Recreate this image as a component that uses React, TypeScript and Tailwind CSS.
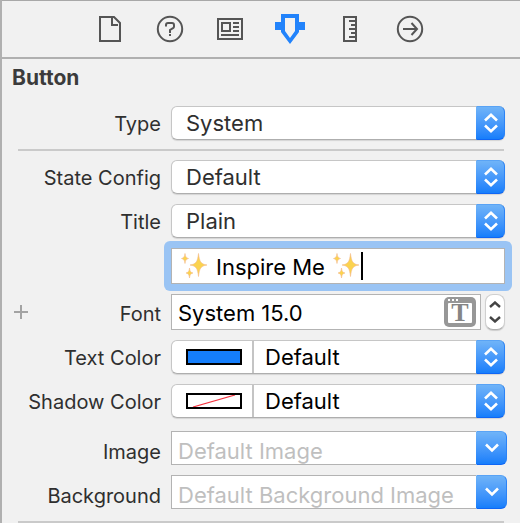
import { useState, type ReactNode } from "react";

function Chevrons() {
  return (
    <svg width="14" height="20" viewBox="0 0 14 20" fill="none" stroke="currentColor" strokeWidth="2.6">
      <path d="M1 7.5 7 1.8l6 5.700" />
      <path d="m1 12.500 6 5.700 6-5.700" />
    </svg>
  );
}

function Sparkles() {
  return (
    <svg className="shrink-0" width="27" height="26" viewBox="0 0 27 26" role="img" aria-label="sparkles">
      <g fill="#fbd34f" stroke="#f3b98a" strokeWidth="0.6">
        <path d="M17.500 0.500c1 8 2 10.500 8.500 11.500-6.500 1-7.500 3.500-8.500 11.500-1-8-2-10.500-8.500-11.500 6.500-1 7.500-3.500 8.500-11.500z" />
        <path d="M4 .5c.5 3.500 1 4.200 3.500 5C5 6.300 4.500 7 4 10.500 3.500 7 3 6.300.5 5.500 3 4.700 3.500 4 4 .5z" />
        <path d="M8.500 15c.5 3.500 1 4.200 3.500 5-2.500.8-3 1.500-3.500 5-.5-3.500-1-4.200-3.500-5 2.500-.8 3-1.500 3.500-5z" />
      </g>
    </svg>
  );
}

const tabs: { name: string; active?: boolean; art: ReactNode }[] = [
  { name: "File", art: <path d="M5 3h14l6 6v18H5zM17 4v7h6" /> },
  {
    name: "Help",
    art: (
      <>
        <circle cx="15" cy="15" r="12.200" />
        <path d="M11 12.500V11q0-2 2-2h4q2 0 2 2v1.500q0 1-1 1.700L15 16v3M15 20v2" />
      </>
    ),
  },
  { name: "Identity", art: <path d="M3 5h24v20H3zM7 9h8v8H7zM18 9h6M18 13h6M18 17h6M6 21h18" /> },
  {
    name: "Attributes",
    active: true,
    art: (
      <path
        d="M6 0h18v8h6v8h-6v2l-9 12-9-12v-2H0V8h6zM10 4v13l5 7 5-7V4z"
        fill="currentColor"
        fillRule="evenodd"
        stroke="none"
      />
    ),
  },
  { name: "Size", art: <path d="M9 3h12v24H9zM14 7h6M16 11h4M14 15h6M16 19h4M14 23h6" /> },
  {
    name: "Connections",
    art: (
      <>
        <circle cx="15" cy="15" r="12.200" />
        <path d="M8 15h14M16.500 9l5.500 6-5.500 6" />
      </>
    ),
  },
];

function Row({ label, id, low, children }: { label: string; id: string; low?: boolean; children: ReactNode }) {
  return (
    <div className={`flex items-center gap-2.5 ${low ? "pr-[13px]" : "pr-[15px]"}`}>
      <label htmlFor={id} className={`w-[159px] shrink-0 text-right text-[20px] leading-6 ${low ? "pt-2" : "pt-0.5"}`}>
        {label}
      </label>
      {children}
    </div>
  );
}

const cap =
  "flex shrink-0 items-center justify-center rounded-r-[6px] border border-t-[#59a3f5] border-r-[#2b83f7] border-b-[#0f66f5] border-l-transparent bg-linear-to-b from-[#6fb3f8] to-[#157efb] text-white";

function PopUp({ id, options, well }: { id: string; options: string[]; well?: ReactNode }) {
  return (
    <div className="relative flex h-[34px] min-w-0 flex-1 rounded-[6px] border border-[#c6c6c6] border-b-[#aeaeae] bg-white shadow-[0_1px_1px_rgba(0,0,0,0.12)]">
      {well}
      <select
        id={id}
        className={`min-w-0 flex-1 appearance-none bg-transparent text-[22px] leading-7 outline-none ${well ? "pl-[11px] text-black" : "pl-3.5"}`}
      >
        {options.map((o) => (
          <option key={o}>{o}</option>
        ))}
      </select>
      <span className={`${cap} pointer-events-none absolute -top-px -right-px -bottom-px w-[29px]`}>
        <Chevrons />
      </span>
    </div>
  );
}

function Well({ label, empty }: { label: string; empty?: boolean }) {
  return (
    <button type="button" aria-label={label} className="flex w-[82px] shrink-0 items-center border-r-2 border-[#c4c4c4] pl-3.5">
      <span className={`block h-4 w-14 border-2 border-black ${empty ? "bg-white" : "bg-[#157efb]"}`}>
        {empty && (
          <svg width="52" height="12" viewBox="0 0 52 12" stroke="#f5333f" strokeWidth="1.200">
            <path d="M5 12 47 0" />
          </svg>
        )}
      </span>
    </button>
  );
}

function Combo({ id, placeholder }: { id: string; placeholder: string }) {
  return (
    <div className="flex h-[34px] min-w-0 flex-1">
      <input
        id={id}
        placeholder={placeholder}
        className="min-w-0 flex-1 border border-r-0 border-[#b3b3b3] bg-white pt-1.5 pl-1.5 text-[22px] leading-6 outline-none placeholder:text-[#bfbfbf]"
      />
      <button type="button" aria-label={`Choose ${id}`} className={`${cap} w-[31px]`}>
        <svg width="14" height="10" viewBox="0 0 14 10" fill="none" stroke="currentColor" strokeWidth="2.600">
          <path d="m1 1.500 6 6 6-6" />
        </svg>
      </button>
    </div>
  );
}

export default function App() {
  const [title, setTitle] = useState("Inspire Me");
  return (
    <main className="border-l-2 border-[#b0b0b0] bg-[#f1f1f1] font-['Inter',sans-serif] text-[#2f2f2f]">
      <nav className="flex h-[59px] items-center justify-center border-t border-b-2 border-t-[#a8a8a8] border-b-[#b0b0b0] pr-0.5">
        {tabs.map((t) => (
          <button
            key={t.name}
            type="button"
            aria-label={t.name}
            className={`flex w-[60px] justify-center ${t.active ? "text-[#2283fb]" : "text-[#555]"}`}
          >
            <svg width="30" height="30" viewBox="0 0 30 30" fill="none" stroke="currentColor" strokeWidth="2">
              {t.art}
            </svg>
          </button>
        ))}
      </nav>

      <h2 className="pt-[7px] pb-4 pl-2.5 text-[21px] leading-6 font-bold text-[#3b3b3b]">Button</h2>
      <Row label="Type" id="type">
        <PopUp id="type" options={["System", "Custom"]} />
      </Row>
      <hr className="my-[9px] mr-4 ml-4 border-t-2 border-[#cacaca]" />

      <div className="flex flex-col gap-2.5">
        <Row label="State Config" id="state">
          <PopUp id="state" options={["Default", "Highlighted"]} />
        </Row>
        <Row label="Title" id="title">
          <PopUp id="title" options={["Plain", "Attributed"]} />
        </Row>
        <Row label="" id="title-text">
          <div className="-m-[7px] min-w-0 flex-1 rounded-[6px] bg-[#9ac4f4] p-[7px]">
            <div className="flex h-9 items-center border border-[#b3b3b3] bg-white pl-[9px] text-[22px] text-black">
              <Sparkles />
              <input
                id="title-text"
                aria-label="Title text"
                value={title}
                onChange={(e) => setTitle(e.target.value)}
                className="mx-2 field-sizing-content pt-0.5 leading-7 outline-none"
              />
              <Sparkles />
              <span className="ml-px h-7 w-0.5 bg-black" />
            </div>
          </div>
        </Row>
        <div className="flex items-center gap-2.5 pr-[15px]">
          <div className="flex w-[159px] shrink-0 items-center justify-between pl-3">
            <button type="button" aria-label="Add font variation" className="text-[#a3a3a3]">
              <svg width="14" height="14" viewBox="0 0 14 14" stroke="currentColor" strokeWidth="2">
                <path d="M7 0v14M0 7h14" />
              </svg>
            </button>
            <label htmlFor="font" className="pt-1 text-[20px] leading-6">
              Font
            </label>
          </div>
          <div className="flex min-w-0 flex-1 gap-1">
            <div className="flex h-9 min-w-0 flex-1 items-center border border-[#b3b3b3] bg-white pr-1 pl-1.5">
              <input
                id="font"
                defaultValue="System 15.0"
                className="min-w-0 flex-1 pt-0.5 text-[22px] leading-7 text-black outline-none"
              />
              <button
                type="button"
                aria-label="Choose font"
                className="flex h-[30px] w-8 flex-col items-center rounded-[5px] bg-[#979797] text-[#858585]"
              >
                <span className="flex h-1.5 w-6 items-center gap-0.5">
                  <span className="size-0.5 bg-white" />
                  <span className="size-0.5 bg-white" />
                  <span className="size-0.5 bg-white" />
                </span>
                <span className="block h-5 w-6 rounded-[1px] bg-white text-center font-['Liberation_Serif',serif] text-[26px] leading-5 font-bold">
                  T
                </span>
              </button>
            </div>
            <div className="flex h-9 w-5 flex-col rounded-[8px] border border-[#d0d0d0] border-b-[#b0b0b0] bg-white text-[#444] shadow-[0_1px_1px_rgba(0,0,0,0.15)]">
              <button type="button" aria-label="Increase font size" className="flex flex-1 items-center justify-center pt-0.5">
                <svg width="12" height="7" viewBox="0 0 12 7" fill="none" stroke="currentColor" strokeWidth="2.400">
                  <path d="m1 6 5-4.500L11 6" />
                </svg>
              </button>
              <button type="button" aria-label="Decrease font size" className="flex flex-1 items-center justify-center pb-0.5">
                <svg width="12" height="7" viewBox="0 0 12 7" fill="none" stroke="currentColor" strokeWidth="2.400">
                  <path d="m1 1 5 4.500L11 1" />
                </svg>
              </button>
            </div>
          </div>
        </div>
        <Row label="Text Color" id="text-color">
          <PopUp id="text-color" options={["Default"]} well={<Well label="Text color well" />} />
        </Row>
        <Row label="Shadow Color" id="shadow-color">
          <PopUp id="shadow-color" options={["Default"]} well={<Well label="Shadow color well" empty />} />
        </Row>
      </div>

      <div className="mt-[13px] flex flex-col gap-2.5">
        <Row label="Image" id="image" low>
          <Combo id="image" placeholder="Default Image" />
        </Row>
        <Row label="Background" id="background" low>
          <Combo id="background" placeholder="Default Background Image" />
        </Row>
      </div>
      <hr className="mt-3 mr-4 ml-4 border-t-2 border-[#cacaca]" />
    </main>
  );
}
